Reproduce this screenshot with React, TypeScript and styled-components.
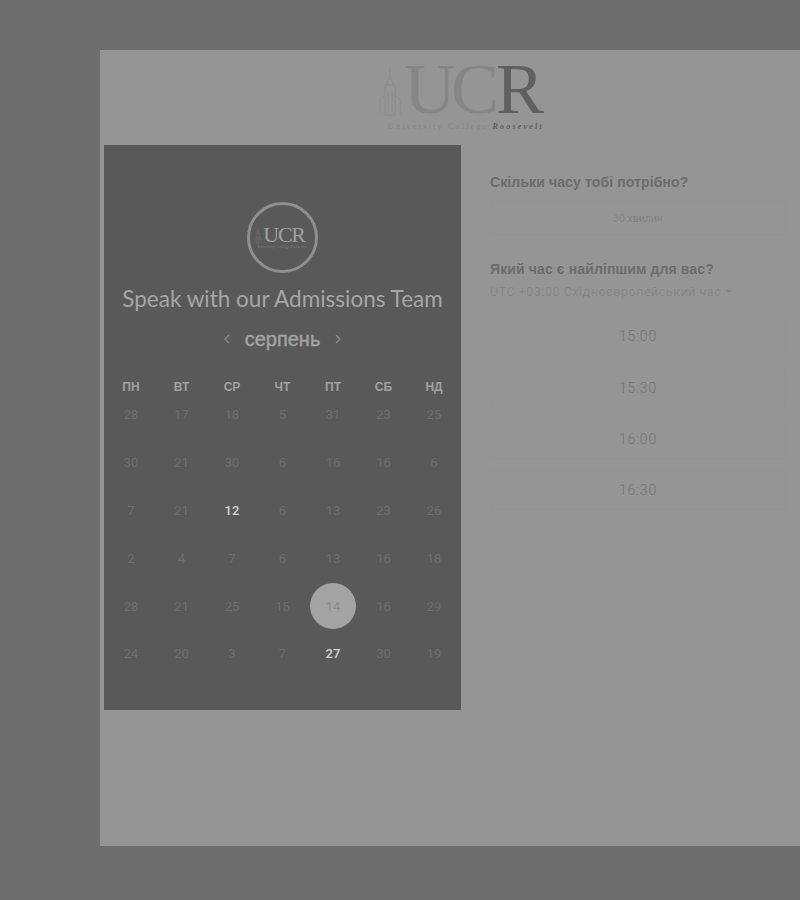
import React from "react";
import styled, { createGlobalStyle } from "styled-components";

const GlobalStyle = createGlobalStyle`
html, body {
    margin: 0;
    padding: 0;
    background: #6e6e6e;
    font-family: "Liberation Sans", Arial, sans-serif;
}
`;

const Page = styled.div`
width: 800px;
height: 900px;
overflow: hidden;
box-sizing: border-box;
padding: 50px 0 54px 100px;
`;

const Card = styled.div`
width: 700px;
height: 796px;
background: #959595;
display: flex;
flex-direction: column;
`;

const Header = styled.header`
height: 95px;
display: flex;
justify-content: center;
padding-left: 26px;
box-sizing: border-box;
padding-top: 12px;
`;

const LogoWrap = styled.div`
width: 170px;
display: flex;
flex-direction: column;
align-items: flex-start;
`;

const LogoRow = styled.div`
display: flex;
align-items: flex-end;
height: 55px;
gap: 2px;
font-family: "Liberation Serif", serif;
font-size: 72px;
line-height: 55px;
letter-spacing: -5px;
color: #868686;
`;

const LogoR = styled.span`
color: #606060;
letter-spacing: 0;
`;

const LogoCaption = styled.div`
font-family: "Liberation Serif", serif;
font-size: 8px;
letter-spacing: 2.2px;
color: #878787;
margin: 5px 0 0 10px;
white-space: nowrap;

em {
    color: #5f5f5f;
    font-weight: 700;
}
`;

const Body = styled.div`
display: flex;
padding-left: 4px;
`;

const Sidebar = styled.aside`
width: 357px;
height: 565px;
background: #595959;
display: flex;
flex-direction: column;
align-items: center;
box-sizing: border-box;
padding-top: 57px;
`;

const Badge = styled.div`
width: 71px;
height: 71px;
box-sizing: border-box;
border: 3px solid #8f8f8f;
border-radius: 50%;
display: flex;
flex-direction: column;
align-items: center;
justify-content: center;
`;

const BadgeMark = styled.div`
display: flex;
align-items: flex-end;
gap: 1px;
height: 20px;
margin-left: -6px;
`;

const BadgeText = styled.span`
font-family: "Liberation Serif", serif;
font-size: 22px;
line-height: 20px;
letter-spacing: -1.3px;
color: #a0a0a0;
`;

const BadgeCaption = styled.span`
font-family: "Liberation Serif", serif;
font-size: 3.5px;
line-height: 5px;
letter-spacing: 0.3px;
color: #858585;
white-space: nowrap;
`;

const Title = styled.h1`
margin: 12px 0 0;
font-family: Lato, sans-serif;
font-size: 22.5px;
line-height: 27px;
font-weight: 400;
color: #a6a6a6;
white-space: nowrap;
`;

const MonthRow = styled.div`
display: flex;
align-items: center;
justify-content: center;
gap: 14px;
margin-top: 15px;
height: 24px;
font-size: 20px;
color: #a3a3a3;
-webkit-text-stroke: 0.4px #a3a3a3;
`;

const Arrow = styled.svg`
width: 8px;
height: 12px;
fill: none;
stroke: #8a8a8a;
stroke-width: 1.3;
`;

const Grid = styled.div`
width: 354px;
margin-top: 32px;
display: grid;
grid-template-columns: repeat(7, 50.5px);
justify-content: center;
`;

const WeekDay = styled.div`
height: 8px;
line-height: 8px;
text-align: center;
font-size: 12px;
font-weight: 700;
color: #a0a0a0;
`;

const Day = styled.div<{ $active?: boolean; $selected?: boolean }>`
height: 47.8px;
display: flex;
align-items: center;
justify-content: center;
position: relative;
font-family: Roboto, sans-serif;
font-size: 13px;
font-weight: ${props => props.$active ? "500" : "400"};
color: ${props => props.$active ? "#d2d2d2" : props.$selected ? "#8a8a8a" : "#6e6e6e"};

span {
    position: relative;
}

&::before {
    content: "";
    display: ${props => props.$selected ? "block" : "none"};
    position: absolute;
    left: 2px;
    top: 1px;
    width: 46px;
    height: 46px;
    border-radius: 50%;
    background: #a3a3a3;
}
`;

const Side = styled.section`
flex: 1;
box-sizing: border-box;
padding: 28px 0 0 29px;
`;

const Question = styled.h2`
margin: 0;
font-size: 14px;
line-height: 18px;
font-weight: 700;
letter-spacing: 0.12px;
color: #6c6c6c;
`;

const Duration = styled.div`
width: 296px;
height: 34px;
margin: 10px 0 25px;
display: flex;
align-items: center;
justify-content: center;
font-family: Roboto, sans-serif;
font-size: 10.5px;
color: #838383;
border: 1px solid #939393;
border-radius: 3px;
box-sizing: border-box;
`;

const Zone = styled.div`
margin-top: 4px;
display: flex;
align-items: center;
gap: 5px;
height: 18px;
font-family: Roboto, sans-serif;
font-size: 12.5px;
letter-spacing: 0.52px;
color: #868686;
white-space: nowrap;
`;

const Caret = styled.i`
width: 0;
height: 0;
border-left: 3.5px solid transparent;
border-right: 3.5px solid transparent;
border-top: 3.5px solid #848484;
`;

const Slots = styled.div`
margin-top: 16px;
display: flex;
flex-direction: column;
gap: 10.8px;
width: 296px;
`;

const Slot = styled.div`
height: 40.5px;
display: flex;
align-items: center;
justify-content: center;
box-sizing: border-box;
border: 1px solid #939393;
border-radius: 3px;
font-family: Roboto, sans-serif;
font-size: 14px;
font-weight: 300;
letter-spacing: 0.8px;
color: #747474;
`;

const Tower = ({ width, height, color }: { width: number, height: number, color: string }) => (
    <svg width={width} height={height} viewBox="0 0 24 50" fill="none" stroke={color} strokeWidth="1">
        <path d="M12 1v8M8 18l4-9 4 9M7 18h10v30H7zM10 24v22M14 24v22M2 48V32l5-3M22 48V32l-5-3" />
    </svg>
);

const weekDays = ["ПН", "ВТ", "СР", "ЧТ", "ПТ", "СБ", "НД"];
const days = [
    28, 17, 18, 5, 31, 23, 25,
    30, 21, 30, 6, 16, 16, 6,
    7, 21, 12, 6, 13, 23, 26,
    2, 4, 7, 6, 13, 16, 18,
    28, 21, 25, 15, 14, 16, 29,
    24, 20, 3, 7, 27, 30, 19,
];
const slots = ["15:00", "15:30", "16:00", "16:30"];

const App = () => {
    return (
        <Page>
            <GlobalStyle />
            <Card>
                <Header>
                    <LogoWrap>
                        <LogoRow>
                            <Tower width={24} height={50} color="#8c8c8c" />
                            <span>UC</span>
                            <LogoR>R</LogoR>
                        </LogoRow>
                        <LogoCaption>University College <em><i>Roosevelt</i></em></LogoCaption>
                    </LogoWrap>
                </Header>
                <Body>
                    <Sidebar>
                        <Badge>
                            <BadgeMark>
                                <Tower width={8} height={18} color="#7c7c7c" />
                                <BadgeText>UCR</BadgeText>
                            </BadgeMark>
                            <BadgeCaption>University College Roosevelt</BadgeCaption>
                        </Badge>
                        <Title>Speak with our Admissions Team</Title>
                        <MonthRow>
                            <Arrow viewBox="0 0 8 12"><path d="M6 2L2 6l4 4" /></Arrow>
                            <span>серпень</span>
                            <Arrow viewBox="0 0 8 12"><path d="M2 2l4 4-4 4" /></Arrow>
                        </MonthRow>
                        <Grid>
                            {weekDays.map(day => <WeekDay key={day}>{day}</WeekDay>)}
                            {days.map((day, index) => (
                                <Day key={index} $active={index === 16 || index === 39} $selected={index === 32}>
                                    <span>{day}</span>
                                </Day>
                            ))}
                        </Grid>
                    </Sidebar>
                    <Side>
                        <Question>Скільки часу тобі потрібно?</Question>
                        <Duration>30 хвилин</Duration>
                        <Question>Який час є найліпшим для вас?</Question>
                        <Zone>UTC +03:00 Східноєвропейський час <Caret /></Zone>
                        <Slots>
                            {slots.map(slot => <Slot key={slot}>{slot}</Slot>)}
                        </Slots>
                    </Side>
                </Body>
            </Card>
        </Page>
    );
};

export default App;
